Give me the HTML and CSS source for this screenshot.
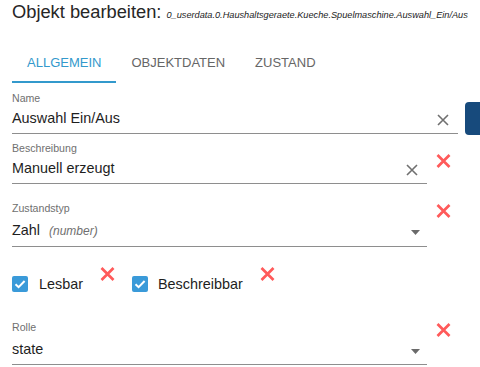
FILE: index.html
```html
<!DOCTYPE html>
<html lang="de">
<head>
<meta charset="utf-8">
<title>Objekt bearbeiten</title>
<link rel="stylesheet" href="styles.css">
</head>
<body>
<div class="page">
  <h1 class="title">Objekt bearbeiten: <span class="oid">0_userdata.0.Haushaltsgeraete.Kueche.Spuelmaschine.Auswahl_Ein/Aus</span></h1>

  <div class="tabs">
    <div class="tab active">Allgemein</div>
    <div class="tab">Objektdaten</div>
    <div class="tab">Zustand</div>
  </div>

  <div class="form">
    <div class="row row-name">
      <div class="field field-wide">
        <div class="label">Name</div>
        <div class="control">
          <span class="value">Auswahl Ein/Aus</span>
          <svg class="clear" width="12" height="12" viewBox="0 0 12 12"><path d="M1 1L11 11M11 1L1 11"/></svg>
        </div>
      </div>
      <div class="side-btn"></div>
    </div>

    <div class="row row-desc">
      <div class="field">
        <div class="label">Beschreibung</div>
        <div class="control">
          <span class="value">Manuell erzeugt</span>
          <svg class="clear" width="12" height="12" viewBox="0 0 12 12"><path d="M1 1L11 11M11 1L1 11"/></svg>
        </div>
      </div>
      <svg class="del del-desc" width="15" height="14" viewBox="0 0 15 14"><path d="M1.5 1L13.5 13M13.5 1L1.5 13"/></svg>
    </div>

    <div class="row row-type">
      <div class="field">
        <div class="label">Zustandstyp</div>
        <div class="control control-select">
          <span class="value">Zahl <i class="hint">(number)</i></span>
          <svg class="arrow" width="9" height="5" viewBox="0 0 9 5"><path d="M0 0L9 0L4.5 5z"/></svg>
        </div>
      </div>
      <svg class="del" width="15" height="14" viewBox="0 0 15 14"><path d="M1.5 1L13.5 13M13.5 1L1.5 13"/></svg>
    </div>

    <div class="row row-checks">
      <div class="check">
        <span class="box"><svg width="16" height="16" viewBox="0 0 16 16"><path d="M3.5 8.2L6.6 11.2L12.6 5"/></svg></span>
        <span class="check-label">Lesbar</span>
      </div>
      <svg class="del del-inline" width="15" height="14" viewBox="0 0 15 14"><path d="M1.5 1L13.5 13M13.5 1L1.5 13"/></svg>
      <div class="check check-second">
        <span class="box"><svg width="16" height="16" viewBox="0 0 16 16"><path d="M3.5 8.2L6.6 11.2L12.6 5"/></svg></span>
        <span class="check-label">Beschreibbar</span>
      </div>
      <svg class="del del-inline" width="15" height="14" viewBox="0 0 15 14"><path d="M1.5 1L13.5 13M13.5 1L1.5 13"/></svg>
    </div>

    <div class="row row-role">
      <div class="field">
        <div class="label">Rolle</div>
        <div class="control control-select">
          <span class="value">state</span>
          <svg class="arrow" width="9" height="5" viewBox="0 0 9 5"><path d="M0 0L9 0L4.5 5z"/></svg>
        </div>
      </div>
      <svg class="del" width="15" height="14" viewBox="0 0 15 14"><path d="M1.5 1L13.5 13M13.5 1L1.5 13"/></svg>
    </div>
  </div>
</div>
</body>
</html>
```

FILE: styles.css
```css
html, body {
  margin: 0;
  padding: 0;
  overflow: hidden;
  background: #ffffff;
}

body {
  font-family: "Liberation Sans", Arial, sans-serif;
  color: #212121;
}

.page {
  width: 480px;
  height: 367px;
  overflow: hidden;
}

.title {
  margin: 0 0 0 12px;
  font-size: 18.3px;
  line-height: 24px;
  font-weight: normal;
  color: #262626;
  white-space: nowrap;
}

.oid {
  font-size: 9.2px;
  font-style: italic;
  color: #222222;
}

.tabs {
  display: flex;
  margin-left: 12px;
}

.tab {
  padding: 28px 15px 11px;
  font-size: 13px;
  line-height: 15px;
  text-transform: uppercase;
  color: #666666;
  border-bottom: 2px solid transparent;
}

.tab.active {
  color: #3399cc;
  border-bottom-color: #3399cc;
}

.form {
  padding: 9px 0 0 12px;
}

.row {
  display: flex;
  align-items: flex-start;
}

.field {
  flex: none;
  width: 415px;
}

.field-wide {
  width: 446px;
}

.label {
  font-size: 10.6px;
  line-height: 13px;
  color: #6f6f6f;
}

.control {
  display: flex;
  align-items: flex-start;
  margin-top: 4px;
  padding-bottom: 6px;
  border-bottom: 1px solid #8e8e8e;
}

.control-select {
  margin-top: 6px;
}

.value {
  flex: 1;
  font-size: 14.4px;
  line-height: 18px;
  color: #1e1e1e;
  white-space: nowrap;
}

.hint {
  margin-left: 5px;
  font-size: 12px;
  color: #6f6f6f;
}

.clear {
  flex: none;
  margin: 5px 9px 0 0;
  fill: none;
  stroke: #707070;
  stroke-width: 1.6;
}

.arrow {
  flex: none;
  margin: 9px 7px 0 0;
  fill: #6a6a6a;
}

.side-btn {
  flex: none;
  width: 40px;
  height: 33px;
  margin: 10px 0 0 7px;
  border-radius: 4px;
  background: #174a7c;
}

.del {
  flex: none;
  margin: 2px 0 0 9px;
  fill: none;
  stroke: #ff5a5a;
  stroke-width: 2.7;
}

.del-desc {
  margin-top: 12px;
}

.del-inline {
  margin: 0 0 0 17px;
}

.row-desc {
  margin-top: 7px;
}

.row-type {
  margin-top: 18px;
}

.row-checks {
  margin-top: 20px;
}

.row-role {
  margin-top: 28px;
}

.check {
  display: flex;
  align-items: flex-start;
}

.check-second {
  margin-left: 17px;
}

.box {
  display: block;
  width: 16px;
  height: 16px;
  margin-top: 9px;
  border-radius: 2px;
  background: #3a9ad9;
}

.box svg {
  display: block;
  fill: none;
  stroke: #ffffff;
  stroke-width: 2;
}

.check-label {
  margin: 8px 0 0 11px;
  font-size: 14.4px;
  line-height: 18px;
  color: #1e1e1e;
}

.check-second .check-label {
  margin-left: 10px;
}
```
